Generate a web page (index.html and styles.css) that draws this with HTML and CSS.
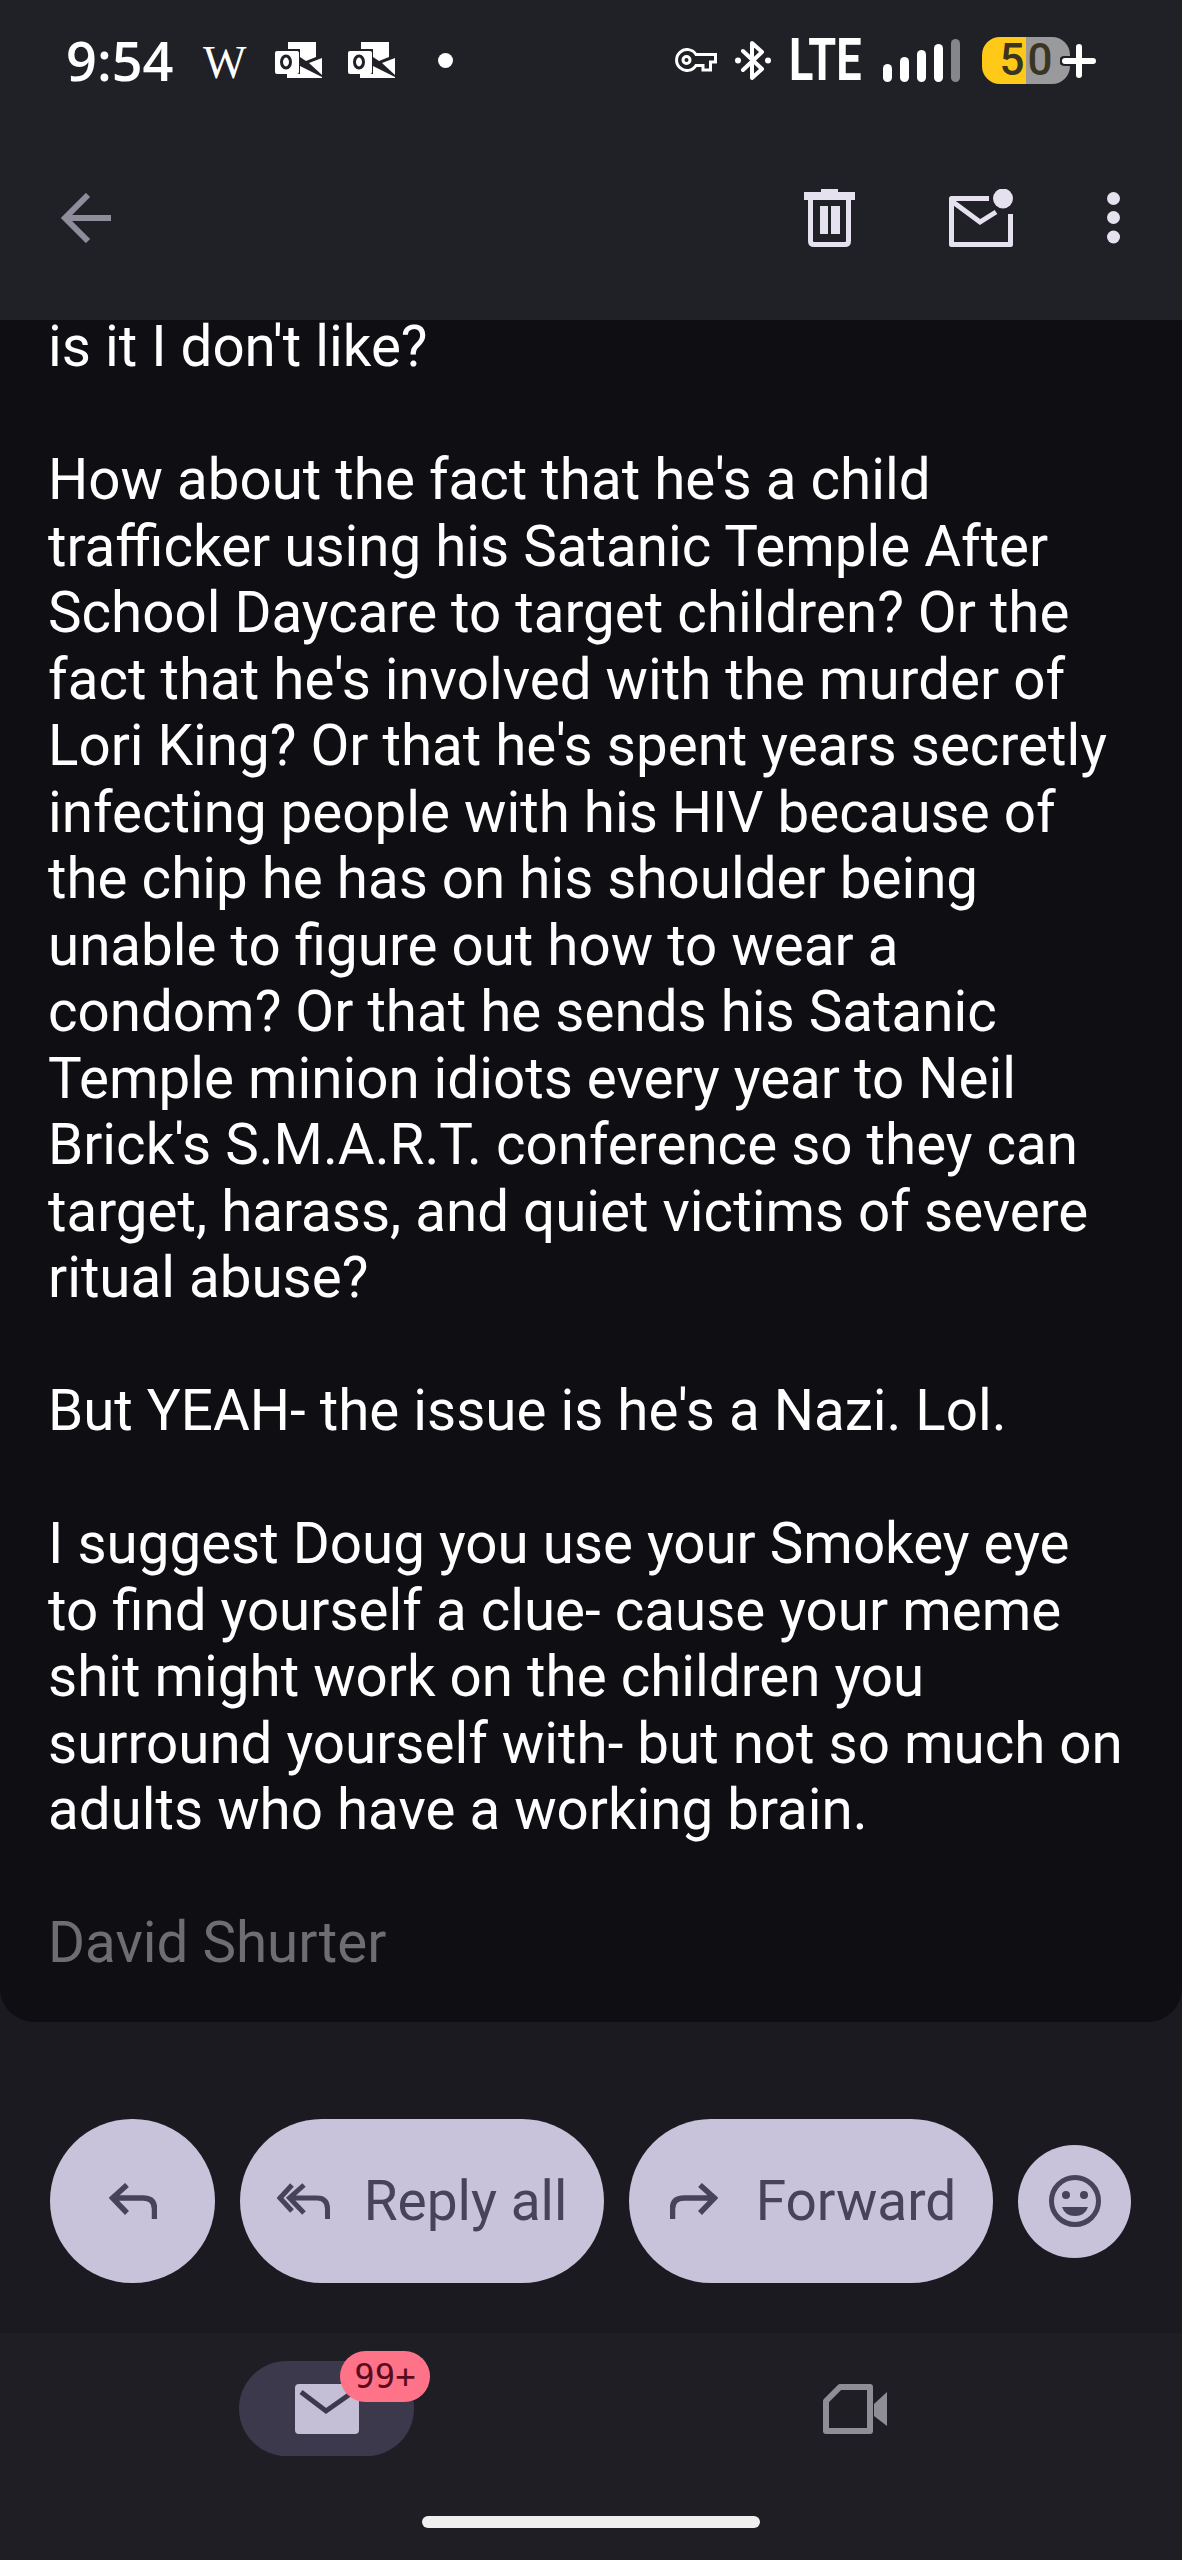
FILE: index.html
```html
<!DOCTYPE html>
<html lang="en">
<head>
  <meta charset="UTF-8">
  <meta name="viewport" content="width=device-width, initial-scale=1.0">
  <title>Message</title>
  <link rel="stylesheet" href="styles.css">
</head>
<body>
  <div class="screen">
    <header class="top">
      <div class="status">
        <div class="status-left">
          <span class="time">9:54</span>
          <span class="wp">W</span>
          <svg class="outlook" width="47" height="36" viewBox="0 0 47 36"><path class="fill" d="M13 0H41V15L31 19 25 15V7H13Z"/><path class="fill" d="M34 21 47 16V33Z"/><path class="fill" d="M25 24 47 35V36H12V32H25Z"/><rect class="fill" x="0" y="9" width="24" height="23" rx="2"/><ellipse class="hole" cx="11" cy="20" rx="4.5" ry="6"/></svg>
          <svg class="outlook" width="47" height="36" viewBox="0 0 47 36"><path class="fill" d="M13 0H41V15L31 19 25 15V7H13Z"/><path class="fill" d="M34 21 47 16V33Z"/><path class="fill" d="M25 24 47 35V36H12V32H25Z"/><rect class="fill" x="0" y="9" width="24" height="23" rx="2"/><ellipse class="hole" cx="11" cy="20" rx="4.5" ry="6"/></svg>
          <span class="dot"></span>
        </div>
        <div class="status-right">
          <svg width="42" height="24" viewBox="0 0 42 24"><path class="line" d="M21 6.5H40.5V14H35.5V22H28V17.5H21A10.5 10.5 0 1 1 21 6.5Z" stroke-width="3"/><circle class="line" cx="11.5" cy="12" r="3.5" stroke-width="3"/></svg>
          <svg width="36" height="41" viewBox="0 0 36 41"><path class="line" d="M8 11 27 29 17 38V3L27 12 8 30" stroke-width="4" stroke-linejoin="round" stroke-linecap="round"/><circle class="fill" cx="3" cy="20.5" r="3"/><circle class="fill" cx="33" cy="20.5" r="3"/></svg>
          <span class="lte"><span>LTE</span></span>
          <div class="signal">
            <i class="b1"></i><i class="b2"></i><i class="b3"></i><i class="b4"></i><i class="b5"></i>
          </div>
          <div class="battery">
            <span>50</span>
            <svg class="plus" width="38" height="38" viewBox="0 0 38 38"><path d="M4 19H34M19 4V34" stroke="#202027" stroke-width="10" stroke-linecap="round"/><path d="M5 19H33M19 5V33" stroke="#fff" stroke-width="6" stroke-linecap="round"/></svg>
          </div>
        </div>
      </div>
      <div class="toolbar">
        <svg class="back" width="50" height="50" viewBox="0 0 50 50"><path d="M50 25H4M27 2 4 25 27 48" fill="none" stroke="#8f8c9b" stroke-width="6"/></svg>
        <div class="tools">
          <svg width="51" height="58" viewBox="0 0 51 58"><path class="tool-fill" d="M17 0H34V3H51V11H0V3H17Z"/><path class="tool-line" d="M6.5 9V52Q6.5 55.5 10 55.5H41Q44.5 55.5 44.5 52V9" stroke-width="5"/><path class="tool-fill" d="M16 17H24V45H16ZM27 17H36V45H27Z"/></svg>
          <svg width="64" height="58" viewBox="0 0 64 58"><path class="tool-line" d="M40 9.5H2.5V55.5H61.5V25" stroke-width="5" stroke-linejoin="round"/><path class="tool-line" d="M4 13 31 33 47 23" stroke-width="5"/><circle class="tool-fill" cx="54" cy="9.5" r="10"/></svg>
          <svg width="13" height="52" viewBox="0 0 13 52"><circle class="tool-fill" cx="6.5" cy="6.5" r="6.5"/><circle class="tool-fill" cx="6.5" cy="25.5" r="6.5"/><circle class="tool-fill" cx="6.5" cy="45" r="6.5"/></svg>
        </div>
      </div>
    </header>

    <main class="mail">
      <div class="message">
        <div class="message-text">
          <p class="first-line">is it I don't like?</p>
          <p>How about the fact that he's a child<br>
          trafficker using his Satanic Temple After<br>
          School Daycare to target children? Or the<br>
          fact that he's involved with the murder of<br>
          Lori King? Or that he's spent years secretly<br>
          infecting people with his HIV because of<br>
          the chip he has on his shoulder being<br>
          unable to figure out how to wear a<br>
          condom? Or that he sends his Satanic<br>
          Temple minion idiots every year to Neil<br>
          Brick's S.M.A.R.T. conference so they can<br>
          target, harass, and quiet victims of severe<br>
          ritual abuse?</p>
          <p>But YEAH- the issue is he's a Nazi. Lol.</p>
          <p>I suggest Doug you use your Smokey eye<br>
          to find yourself a clue- cause your meme<br>
          shit might work on the children you<br>
          surround yourself with- but not so much on<br>
          adults who have a working brain.</p>
          <p class="signature">David Shurter</p>
        </div>
      </div>
      <div class="actions">
        <button class="action round">
          <svg width="48" height="36" viewBox="0 0 48 36"><path class="btn-line" d="M18 2 3.5 15 18 30M4 15H34Q45.5 15 45.5 26V36" stroke-width="5.500"/></svg>
        </button>
        <button class="action pill">
          <svg width="53" height="36" viewBox="0 0 53 36"><path class="btn-line" d="M15 2 3 15 15 28M27 2 12.500 15 27 30M13 15H40Q50.500 15 50.500 26V36" stroke-width="5"/></svg>
          <span>Reply all</span>
        </button>
        <button class="action pill forward">
          <svg width="48" height="36" viewBox="0 0 48 36"><path class="btn-line" d="M30 2 44.500 15 30 30M44 15H14Q2.500 15 2.500 26V36" stroke-width="5.500"/></svg>
          <span>Forward</span>
        </button>
        <button class="action smile">
          <svg width="52" height="52" viewBox="0 0 52 52"><circle class="btn-line" cx="26" cy="26" r="23.500" stroke-width="5"/><circle class="btn-fill" cx="17" cy="20" r="4"/><circle class="btn-fill" cx="35" cy="20" r="4"/><path class="btn-fill" d="M13 32H39Q36 41 26 41T13 32Z"/></svg>
        </button>
      </div>
    </main>

    <nav class="nav">
      <div class="nav-row">
        <div class="nav-pill">
          <svg width="64" height="50" viewBox="0 0 64 50"><rect x="0" y="0" width="64" height="50" rx="4" fill="#c4bfd6"/><path d="M6 8 31 27 58 8" fill="none" stroke="#3c394c" stroke-width="5"/></svg>
          <span class="badge">99+</span>
        </div>
        <svg width="64" height="50" viewBox="0 0 64 50"><path d="M17 3H47V47H3V17Z" fill="none" stroke="#8f8d96" stroke-width="6" stroke-linejoin="round"/><path d="M51 20 64 8V42L51 32Z" fill="#8f8d96"/></svg>
      </div>
      <div class="home-bar"></div>
    </nav>
  </div>
</body>
</html>
```

FILE: styles.css
```css
body {
  margin: 0;
  background: #202027;
  font-family: Roboto, sans-serif;
}
svg {
  display: block;
  flex-shrink: 0;
}
.screen {
  width: 1182px;
  height: 2560px;
  display: flex;
  flex-direction: column;
  overflow: hidden;
}
.fill {
  fill: #fff;
}
.hole {
  fill: none;
  stroke: #202027;
  stroke-width: 3;
}
.line {
  fill: none;
  stroke: #fff;
}
.top {
  height: 320px;
  background: #202027;
  flex-shrink: 0;
}
.status {
  height: 120px;
  display: flex;
  justify-content: space-between;
  align-items: center;
  padding: 0 88px 0 66px;
}
.status-left, .status-right {
  display: flex;
  align-items: center;
}
.time {
  font-family: "Open Sans", sans-serif;
  font-size: 54px;
  font-weight: 600;
  color: #fff;
  line-height: 60px;
  width: 106px;
}
.wp {
  font-family: "Liberation Serif", serif;
  font-size: 46px;
  color: #fff;
  line-height: 60px;
  width: 43px;
  margin: 6px 29px 0 31px;
}
.outlook {
  margin-right: 26px;
}
.dot {
  width: 15px;
  height: 15px;
  margin-left: 17px;
  border-radius: 50%;
  background: #fff;
}
.status-right svg {
  margin-right: 18px;
}
.lte {
  width: 72px;
  margin-right: 22px;
  color: #fff;
  font-size: 60px;
  font-weight: 700;
  line-height: 60px;
}
.lte span {
  display: block;
  transform: scaleX(0.75);
  transform-origin: left center;
}
.signal {
  display: flex;
  align-items: flex-end;
  gap: 7.5px;
  height: 43px;
  margin-right: 22px;
}
.signal i {
  display: block;
  width: 9.500px;
  background: #fff;
  border-radius: 5px;
}
.b1 { height: 18px; }
.b2 { height: 25px; }
.b3 { height: 32px; }
.b4 { height: 38px; }
.signal .b5 {
  height: 43px;
  background: #85858a;
}
.battery {
  position: relative;
  width: 88px;
  height: 47px;
  margin-right: 24px;
  border-radius: 18px;
  background: linear-gradient(to right, #ffc917 50%, #9a9a9c 50%);
  color: #3a3420;
  font-size: 44px;
  font-weight: 500;
  line-height: 47px;
  text-align: center;
  letter-spacing: 3px;
}
.battery span {
  display: block;
  padding-left: 3px;
}
.status-right .plus {
  position: absolute;
  left: 78px;
  top: 5px;
  margin: 0;
}
.toolbar {
  height: 196px;
  padding: 0 62px 4px 61px;
  display: flex;
  justify-content: space-between;
  align-items: center;
}
.tools {
  display: flex;
  align-items: center;
  gap: 94px;
}
.tool-fill {
  fill: #e6e1ef;
}
.tool-line {
  fill: none;
  stroke: #e6e1ef;
}
.mail {
  flex: 1;
  display: flex;
  flex-direction: column;
  background: #1b1a20;
}
.message {
  height: 1702px;
  flex-shrink: 0;
  background: #0f0e13;
  border-radius: 0 0 34px 34px;
}
.message-text {
  padding: 0 30px 0 48px;
  color: #fff;
  font-size: 56.5px;
  line-height: 66.5px;
  white-space: nowrap;
}
.message-text p {
  margin: 0 0 66.5px;
}
.message-text .first-line {
  line-height: 54px;
  margin-bottom: 73px;
}
.message-text .signature {
  color: #6e6d72;
  margin: 0;
}
.actions {
  display: flex;
  align-items: center;
  gap: 25px;
  padding: 97px 0 50px 50px;
}
.action {
  display: flex;
  align-items: center;
  justify-content: center;
  border: none;
  padding: 0;
  background: #c8c3da;
  color: #46435a;
  font-family: Roboto, sans-serif;
  font-size: 55px;
  border-radius: 82px;
  height: 164px;
}
.round {
  width: 165px;
}
.pill {
  width: 364px;
  gap: 34px;
}
.forward {
  gap: 38px;
  padding-left: 4px;
  box-sizing: border-box;
}
.smile {
  width: 113px;
  height: 113px;
  border-radius: 50%;
}
.btn-line {
  fill: none;
  stroke: #46435a;
}
.btn-fill {
  fill: #46435a;
}
.nav {
  height: 227px;
  flex-shrink: 0;
  background: #1f1e25;
  display: flex;
  flex-direction: column;
}
.nav-row {
  display: flex;
  justify-content: space-between;
  align-items: center;
  padding: 28px 295px 0 239px;
}
.nav-pill {
  position: relative;
  width: 175px;
  height: 95px;
  border-radius: 48px;
  background: #3c394c;
  display: flex;
  align-items: center;
  justify-content: center;
}
.badge {
  position: absolute;
  left: 101px;
  top: -10px;
  width: 90px;
  height: 51px;
  border-radius: 26px;
  background: #ff7389;
  color: #5b0a1e;
  font-family: "DejaVu Sans Mono", monospace;
  font-size: 34px;
  line-height: 51px;
  text-align: center;
}
.home-bar {
  width: 338px;
  height: 12px;
  margin: 60px auto 0;
  border-radius: 6px;
  background: #f0f0f0;
}
```
